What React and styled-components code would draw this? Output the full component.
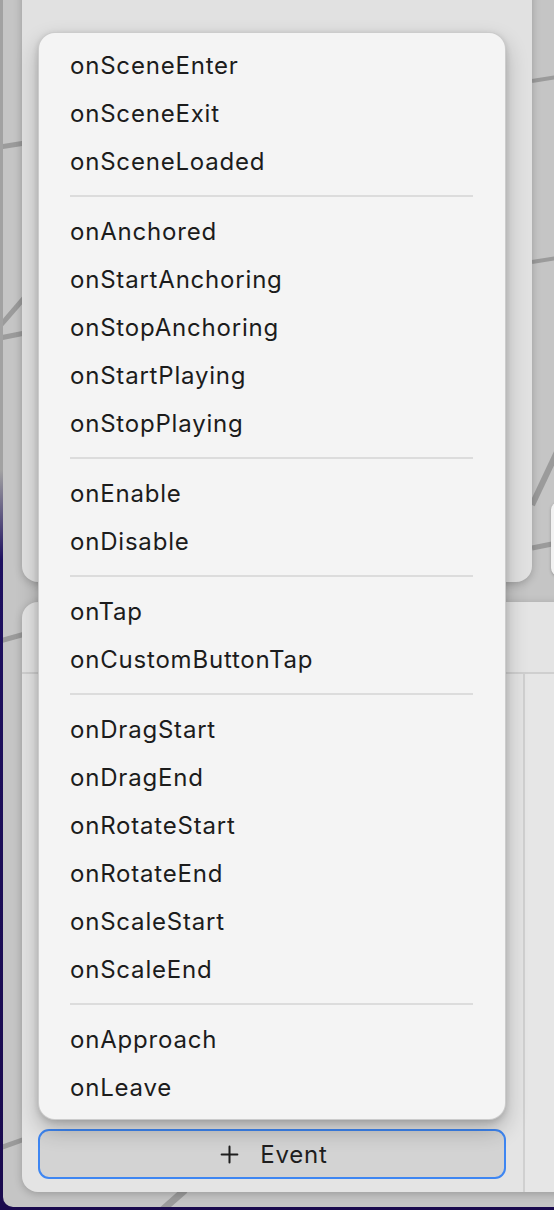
import React from "react";
import styled, { createGlobalStyle } from "styled-components";
import { Plus } from "lucide-react";

const Global = createGlobalStyle`
  html, body { margin: 0; padding: 0; }
  body { width: 554px; height: 1210px; overflow: hidden; font-family: Inter, "Noto Sans", "Liberation Sans", sans-serif; }
`;

const Desktop = styled.div`
  width: 554px;
  height: 1210px;
  background: linear-gradient(to bottom, #a2a2a2 0, #a2a2a2 470px, #1e1060 560px, #1a0a4e 100%);
  overflow: hidden;
`;

const Window = styled.div`
  position: relative;
  margin-left: 3px;
  height: 1207px;
  background: #c5c5c5;
  border-bottom-left-radius: 10px;
  overflow: hidden;
`;

const Lines = styled.svg`
  position: absolute;
  inset: 0;
  width: 100%;
  height: 100%;
`;

const Node = styled.div`
  position: absolute;
  left: 548px;
  top: 502px;
  width: 30px;
  height: 74px;
  border-radius: 8px;
  background: #f2f2f2;
  box-shadow: 0 1px 3px rgba(0, 0, 0, 0.25);
`;

const Panels = styled.div`
  position: relative;
  display: flex;
  flex-direction: column;
  gap: 20px;
  height: 100%;
  box-sizing: border-box;
  padding: 0 0 15px 19px;
`;

const TopPanel = styled.div`
  flex: none;
  height: 602px;
  margin-top: -20px;
  margin-right: 22px;
  background: #e1e1e1;
  border-radius: 0 0 16px 16px;
  box-shadow: 0 2px 8px rgba(0, 0, 0, 0.22);
`;

const BottomPanel = styled.div`
  flex: 1;
  display: flex;
  flex-direction: column;
  margin-right: -30px;
  background: #e4e4e4;
  border-radius: 16px;
  box-shadow: 0 2px 8px rgba(0, 0, 0, 0.22);
  overflow: hidden;
`;

const PanelHeader = styled.div`
  flex: none;
  height: 70px;
  border-bottom: 2px solid #cfcfcf;
`;

const PanelBody = styled.div`
  flex: 1;
  display: flex;
`;

const ListColumn = styled.div`
  width: 503px;
  flex: none;
  box-sizing: border-box;
  display: flex;
  flex-direction: column;
  justify-content: flex-end;
  padding: 0 17px 13px 16px;
  border-right: 2px solid #d0d0d0;
`;

const SideColumn = styled.div`
  flex: 1;
  background: #e6e6e6;
`;

const AddButton = styled.button`
  height: 50px;
  width: 100%;
  box-sizing: border-box;
  display: flex;
  align-items: center;
  justify-content: center;
  gap: 17px;
  background: #d3d3d3;
  border: 2px solid #3e86f2;
  border-radius: 11px;
  font-family: Inter, "Noto Sans", "Liberation Sans", sans-serif;
  font-size: 24px;
  color: #1e1e1e;
  padding: 0 0 0 0;
  letter-spacing: 0.8px;
`;

const Menu = styled.div`
  position: absolute;
  left: 35px;
  top: 32px;
  width: 468px;
  box-sizing: border-box;
  padding: 8px 0;
  background: #f4f4f4;
  border: 1px solid rgba(0, 0, 0, 0.16);
  border-radius: 17px;
  box-shadow: 0 10px 22px rgba(0, 0, 0, 0.24), 0 2px 6px rgba(0, 0, 0, 0.14);
`;

const Item = styled.div`
  height: 48px;
  display: flex;
  align-items: center;
  padding-left: 31px;
  font-size: 24px;
  letter-spacing: 0.8px;
  color: #1c1c1c;
`;

const Separator = styled.div`
  height: 2px;
  margin: 10px 32px 10px 31px;
  background: #dcdcdc;
`;

const groups = [
  ["onSceneEnter", "onSceneExit", "onSceneLoaded"],
  ["onAnchored", "onStartAnchoring", "onStopAnchoring", "onStartPlaying", "onStopPlaying"],
  ["onEnable", "onDisable"],
  ["onTap", "onCustomButtonTap"],
  ["onDragStart", "onDragEnd", "onRotateStart", "onRotateEnd", "onScaleStart", "onScaleEnd"],
  ["onApproach", "onLeave"],
];

const segments = [
  [-3, 147, 22, 143, 5],
  [-3, 326, 22, 297, 5],
  [-3, 338, 22, 333, 5],
  [-3, 641, 22, 634, 5],
  [-3, 1148, 22, 1139, 5],
  [529, 81, 554, 77, 4],
  [529, 262, 554, 258, 4],
  [529, 505, 554, 452, 6],
  [529, 548, 554, 543, 5],
  [182, 1190, 157, 1212, 7],
];

export default function App() {
  return (
    <>
      <Global />
      <Desktop>
        <Window>
          <Lines viewBox="0 0 551 1207">
            {segments.map(([x1, y1, x2, y2, w], i) => (
              <line key={i} x1={x1} y1={y1} x2={x2} y2={y2} stroke="#9b9b9b" strokeWidth={w} />
            ))}
          </Lines>
          <Node />
          <Panels>
            <TopPanel />
            <BottomPanel>
              <PanelHeader />
              <PanelBody>
                <ListColumn>
                  <AddButton>
                    <Plus size={27} strokeWidth={1.8} />
                    Event
                  </AddButton>
                </ListColumn>
                <SideColumn />
              </PanelBody>
            </BottomPanel>
          </Panels>
          <Menu>
            {groups.map((g, gi) => (
              <React.Fragment key={gi}>
                {gi > 0 && <Separator />}
                {g.map((name) => (
                  <Item key={name}>{name}</Item>
                ))}
              </React.Fragment>
            ))}
          </Menu>
        </Window>
      </Desktop>
    </>
  );
}
